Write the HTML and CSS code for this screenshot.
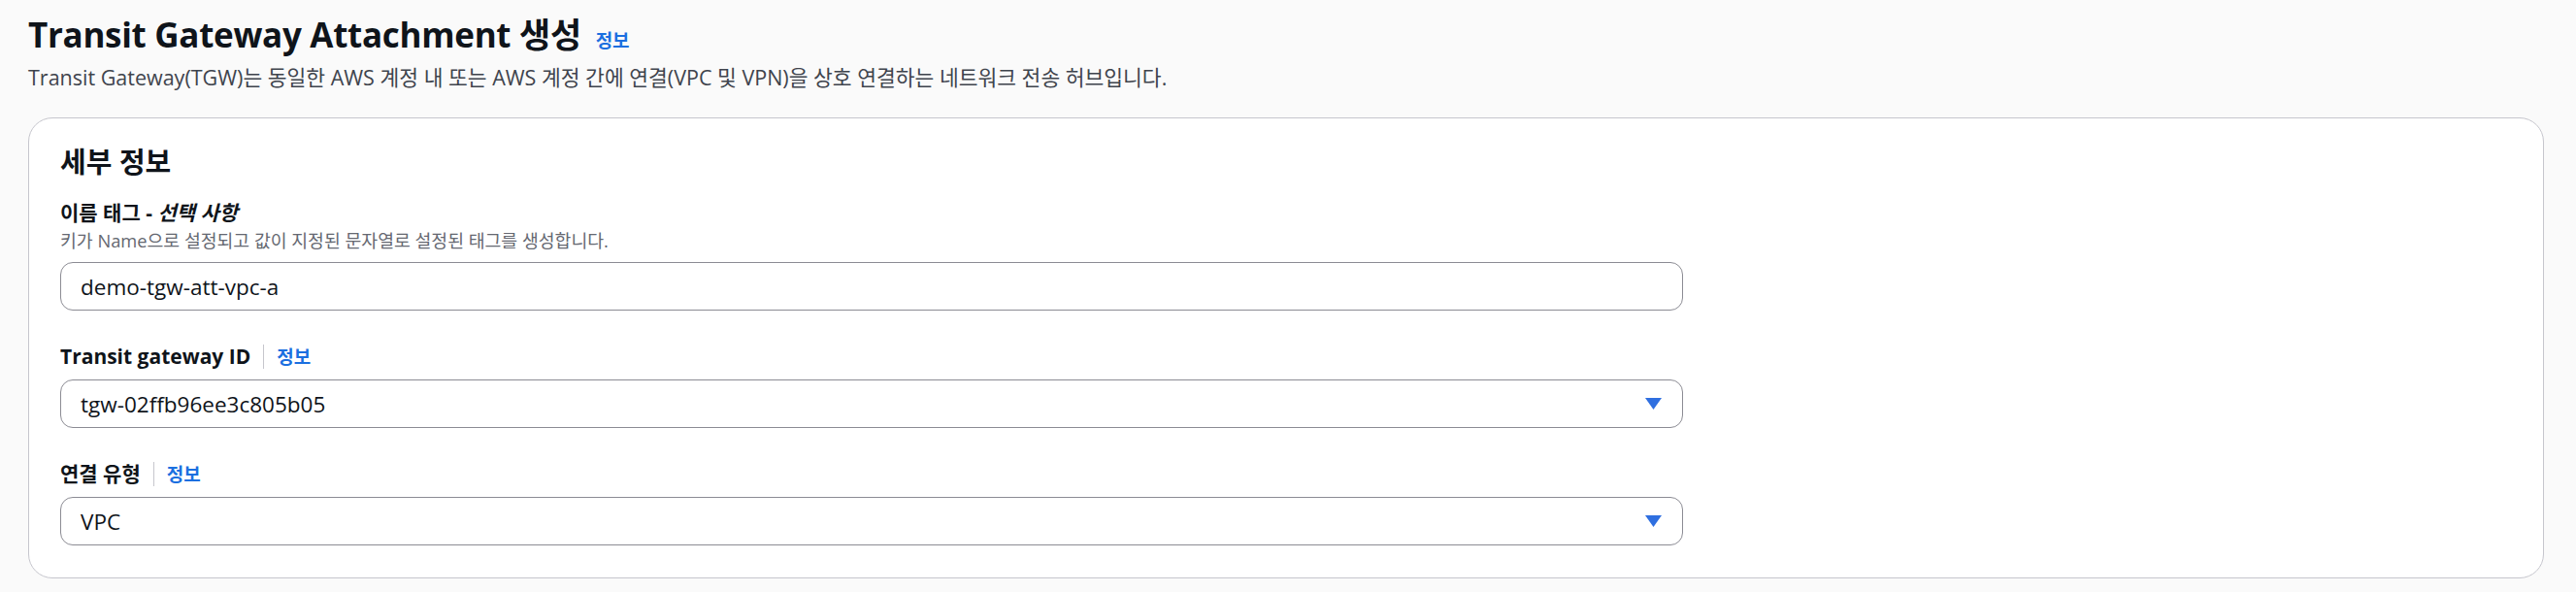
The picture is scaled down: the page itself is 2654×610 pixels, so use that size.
FILE: index.html
```html
<!DOCTYPE html>
<html lang="ko">
<head>
<meta charset="utf-8">
<title>Transit Gateway Attachment 생성</title>
<link rel="stylesheet" href="styles.css">
</head>
<body>
<div class="page">
  <header class="page-header">
    <h1 class="title">Transit Gateway Attachment 생성 <a class="info info-title">정보</a></h1>
    <p class="subtitle">Transit Gateway(TGW)는 동일한 AWS 계정 내 또는 AWS 계정 간에 연결(VPC 및 VPN)을 상호 연결하는 네트워크 전송 허브입니다.</p>
  </header>
  <section class="card">
    <h2 class="card-title">세부 정보</h2>
    <div class="field">
      <div class="label-row"><span class="label">이름 태그 - <i>선택 사항</i></span></div>
      <div class="desc">키가 Name으로 설정되고 값이 지정된 문자열로 설정된 태그를 생성합니다.</div>
      <div class="input">demo-tgw-att-vpc-a</div>
    </div>
    <div class="field">
      <div class="label-row"><span class="label">Transit gateway ID</span><span class="divider"></span><a class="info">정보</a></div>
      <div class="input select"><span>tgw-02ffb96ee3c805b05</span>
        <svg class="caret" width="17" height="12" viewBox="0 0 17 12"><path d="M0 0 H17 L8.5 12 Z" fill="#2f6fe0"/></svg>
      </div>
    </div>
    <div class="field">
      <div class="label-row"><span class="label">연결 유형</span><span class="divider"></span><a class="info">정보</a></div>
      <div class="input select"><span>VPC</span>
        <svg class="caret" width="17" height="12" viewBox="0 0 17 12"><path d="M0 0 H17 L8.5 12 Z" fill="#2f6fe0"/></svg>
      </div>
    </div>
  </section>
</div>
</body>
</html>
```

FILE: styles.css
```css
* { box-sizing: border-box; }
html, body { margin: 0; padding: 0; }
body {
  background: #fafafa;
  color: #0f141a;
  font-family: "Open Sans", "Noto Sans CJK KR", sans-serif;
}
.page {
  padding: 13px 35px 0 29px;
}
.page-header { margin-bottom: 26px; }
.title {
  margin: 0;
  font-size: 35px;
  line-height: 46px;
  font-weight: 700;
  letter-spacing: -0.3px;
  color: #0f141a;
}
.info {
  color: #1b6fe0;
  font-size: 19px;
  font-weight: 600;
  letter-spacing: 0;
  text-decoration: none;
}
.info-title { margin-left: 6px; }
.subtitle {
  margin: 0;
  font-size: 21.5px;
  line-height: 30px;
  color: #3f444d;
}
.card {
  width: 2592px;
  background: #ffffff;
  border: 1.5px solid #c6c6cd;
  border-radius: 25px;
  padding: 26px 32px 33px 32px;
}
.card-title {
  margin: 0 0 18px;
  font-size: 29px;
  line-height: 38px;
  font-weight: 700;
}
.field { margin-bottom: 32px; }
.field:last-child { margin-bottom: 0; }
.label-row {
  display: flex;
  align-items: center;
  height: 30px;
  margin-bottom: 9px;
}
.field:first-of-type .label-row { margin-bottom: 1px; }
.label {
  font-size: 21px;
  line-height: 30px;
  font-weight: 700;
}
.label i { font-style: italic; }
.divider {
  width: 1px;
  height: 25px;
  background: #c6c6cd;
  margin: 0 13px;
}
.desc {
  font-size: 18.3px;
  line-height: 26px;
  color: #656871;
  margin-bottom: 9px;
}
.input {
  width: 1672px;
  height: 50px;
  border: 1.5px solid #8c8c94;
  border-radius: 13px;
  background: #ffffff;
  padding: 0 20px;
  display: flex;
  align-items: center;
  font-size: 22.5px;
  color: #0f141a;
}
.select { justify-content: space-between; }
.caret { margin-right: 1px; }
```
